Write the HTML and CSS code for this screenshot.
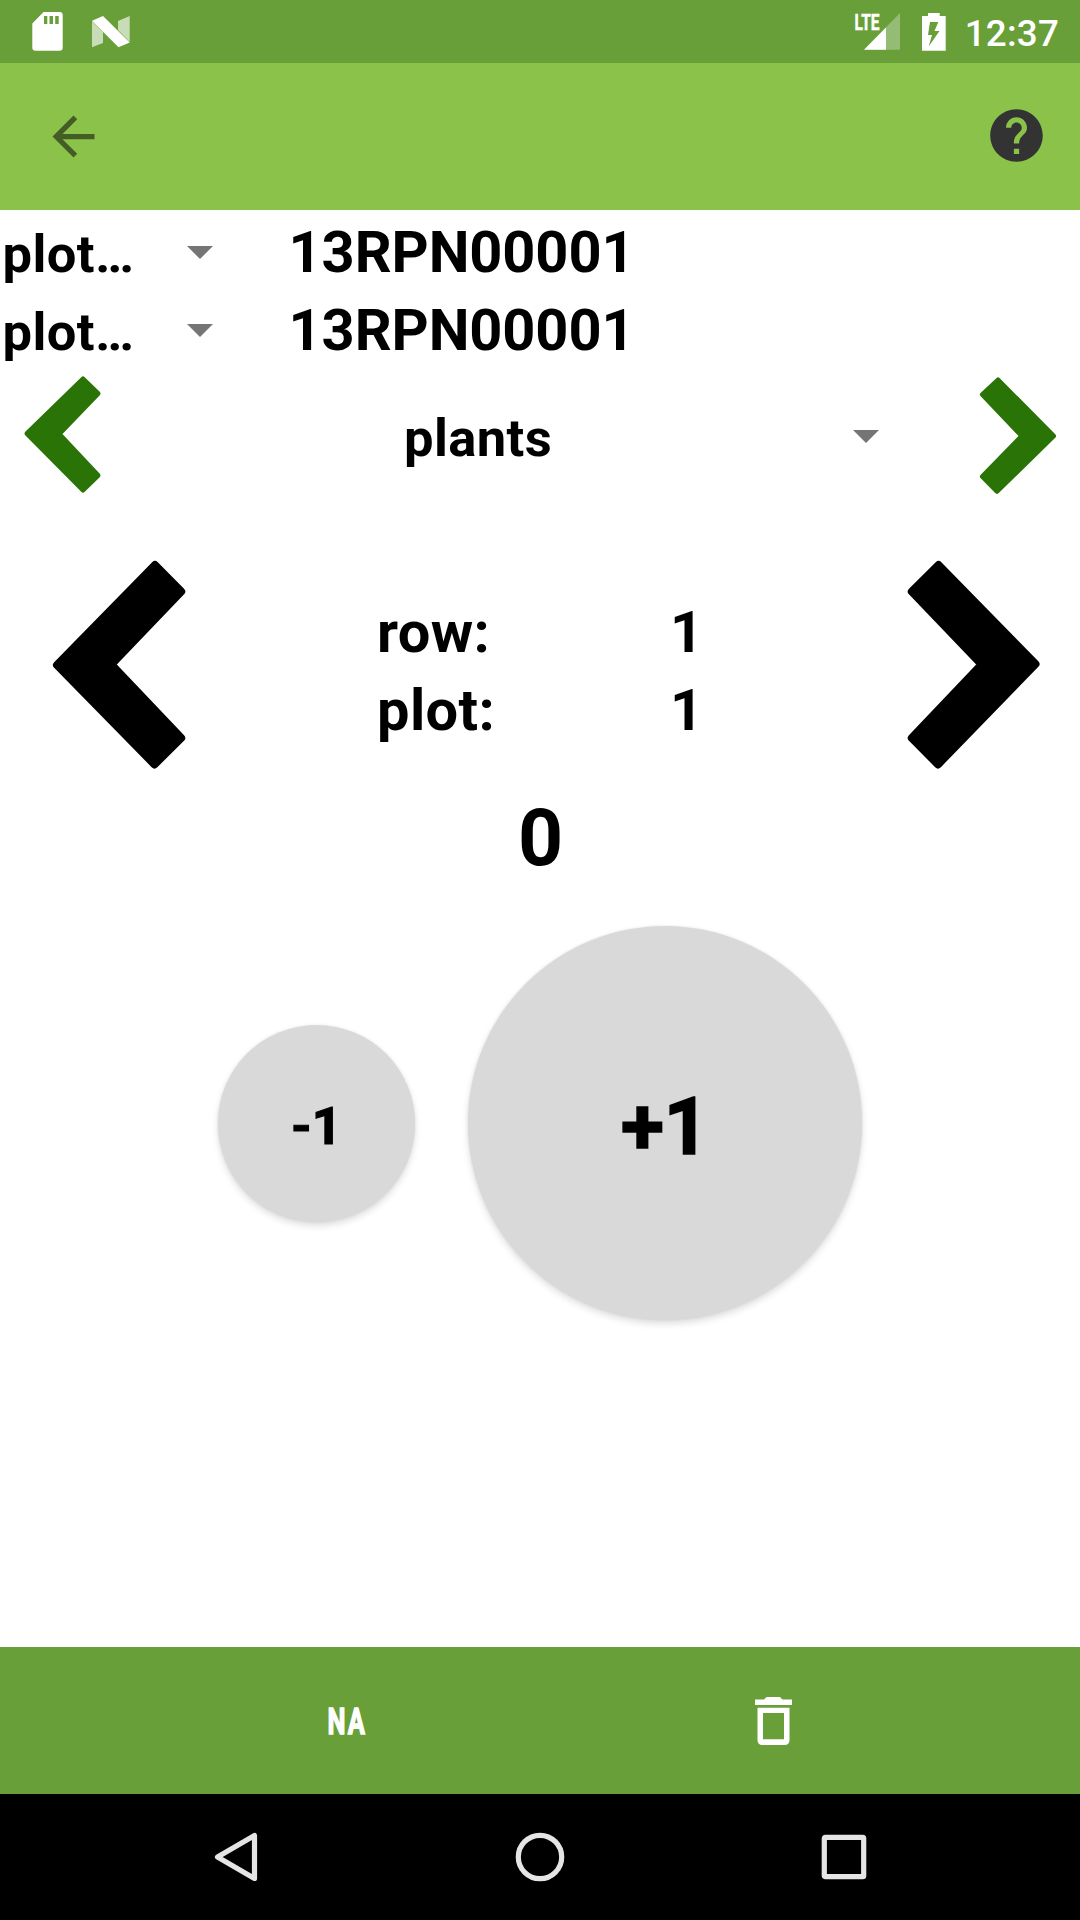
FILE: index.html
```html
<!DOCTYPE html>
<html lang="en">
<head>
<meta charset="utf-8">
<title>Collect</title>
<link rel="stylesheet" href="styles.css">
</head>
<body>
<div class="screen">
  <header class="status">
    <div class="status-left">
      <svg width="31" height="39" viewBox="0 0 31 39"><path fill="#fff" fill-rule="evenodd" d="M11.5 0H27.5Q30.700 0 30.700 3.200V35.500Q30.700 38.700 27.500 38.700H3.500Q.3 38.700.3 35.500V11.500ZM12 4V12H15.300V4ZM17.500 4V12H21V4ZM23.200 4V12H26.700V4Z"/></svg>
      <svg width="38" height="32" viewBox="0 0 38 32"><path fill="#fff" fill-opacity=".64" d="M0 5L11 16V27L0 31.300ZM26 5L37.700 0V26L26 14Z"/><path fill="#fff" d="M0 4.700L11 0L37.700 26.500L26.500 31.300Z"/></svg>
    </div>
    <div class="status-right">
      <svg class="signal" width="46" height="38" viewBox="0 0 46 38"><path fill="#fff" fill-opacity=".3" d="M45 0V36.700H9Z"/><path fill="#fff" d="M9 36.700L31 14.500V36.700Z"/><text class="lte" x="-.5" y="16.500" textLength="25" lengthAdjust="spacingAndGlyphs">LTE</text></svg>
      <svg class="battery" width="24" height="38" viewBox="0 0 24 38"><path fill="#fff" fill-rule="evenodd" d="M6 0H17.700V3H23.700V37.700H0V3H6ZM8 9L6 22H10L6.700 33.500L17.500 18H12.500L16.300 9Z"/></svg>
      <span class="clock">12:37</span>
    </div>
  </header>

  <nav class="appbar">
    <svg width="63" height="63" viewBox="0 0 24 24"><path fill="#445c26" d="M20 11H7.830l5.590-5.590L12 4l-8 8 8 8 1.410-1.410L7.830 13H20v-2z"/></svg>
    <svg class="help" width="63" height="63" viewBox="0 0 24 24"><path fill="#333" d="M12 2C6.480 2 2 6.480 2 12s4.480 10 10 10 10-4.480 10-10S17.520 2 12 2zm1 17h-2v-2h2v2zm2.070-7.750l-.9.920C13.450 12.900 13 13.500 13 15h-2v-.5c0-1.100.45-2.100 1.170-2.830l1.240-1.260c.37-.36.59-.86.59-1.410 0-1.100-.9-2-2-2s-2 .9-2 2H8c0-2.210 1.790-4 4-4s4 1.790 4 4c0 .88-.36 1.680-.93 2.250z"/></svg>
  </nav>

  <main class="content">
    <div class="id-row">
      <span class="spinner-text">plot…</span>
      <svg class="caret" width="26" height="13" viewBox="0 0 26 13"><path d="M0 0H26L13 13Z"/></svg>
      <span class="value">13RPN00001</span>
    </div>
    <div class="id-row">
      <span class="spinner-text">plot…</span>
      <svg class="caret" width="26" height="13" viewBox="0 0 26 13"><path d="M0 0H26L13 13Z"/></svg>
      <span class="value">13RPN00001</span>
    </div>

    <div class="trait-row">
      <svg class="chevron-green" width="78" height="118" viewBox="24 376 78 118"><path d="M27 433.500L83 379L98 393.500L59 434L98 475.500L83 490Z"/></svg>
      <div class="trait-spinner">
        <span class="spinner-text">plants</span>
        <svg class="caret" width="26" height="13" viewBox="0 0 26 13"><path d="M0 0H26L13 13Z"/></svg>
      </div>
      <svg class="chevron-green" width="78" height="118" viewBox="978.500 376 78 118"><path d="M1053 436L997.500 380L982 394.500L1021.500 436L982 476.500L996.500 491.200Z"/></svg>
    </div>

    <div class="plot-row">
      <svg class="chevron-black" width="134" height="210" viewBox="52 560 134 210"><path d="M57 665L155 565L181.200 591.500L111.300 664.500L181.200 738L154.500 764.400Z"/></svg>
      <div class="position">
        <span class="label">row:</span><span>1</span>
        <span class="label">plot:</span><span>1</span>
      </div>
      <svg class="chevron-black" width="134" height="210" viewBox="906.500 560 134 210"><path d="M1035 664L938 565L911.300 591.500L981.200 664.500L911.300 738L937.500 764.400Z"/></svg>
    </div>

    <div class="count">0</div>

    <div class="counter">
      <button class="round minus">-1</button>
      <button class="round plus">+1</button>
    </div>
  </main>

  <footer class="toolbar">
    <svg width="40" height="48" viewBox="0 0 40 48"><text class="na" x="0.500" y="36.500" textLength="39.500" lengthAdjust="spacingAndGlyphs">NA</text></svg>
    <svg width="37" height="48" viewBox="0 0 37 48"><path fill="#fff" fill-rule="evenodd" d="M0 2.500H9L11.500 0H25L27.500 2.500H37V8H0ZM2.500 10.700H34.500V43Q34.500 48 29.500 48H7.500Q2.500 48 2.500 43ZM8 16V42.300H29V16Z"/></svg>
  </footer>

  <div class="sysnav">
    <svg width="50" height="50" viewBox="0 0 50 50"><path d="M6.500 25L43.500 3.500V46.500Z"/></svg>
    <svg width="50" height="50" viewBox="0 0 50 50"><circle cx="25" cy="25" r="21.700"/></svg>
    <svg width="50" height="50" viewBox="0 0 50 50"><rect x="5.300" y="5.300" width="39.400" height="39.400" rx="1"/></svg>
  </div>
</div>
</body>
</html>
```
FILE: styles.css
```css
* { box-sizing: border-box; }
body { margin: 0; font-family: Roboto, sans-serif; color: #000; background: #fff; }
svg { display: block; flex: none; overflow: visible; }
.screen { width: 1080px; height: 1920px; display: flex; flex-direction: column; overflow: hidden; }

.status { height: 63px; background: #689f38; display: flex; justify-content: space-between; padding: 0 21px 0 32px; }
.status-left, .status-right { display: flex; align-items: center; }
.status-left { gap: 29px; }
.lte { font: 700 22.5px Roboto, sans-serif; fill: #fff; stroke: #fff; stroke-width: .5; }
.battery { margin-left: 21px; }
.clock { margin-left: 19px; padding-top: 3px; font-size: 36.75px; font-weight: 500; letter-spacing: .2px; color: #fff; }

.appbar { height: 147px; background: #8bc34a; display: flex; align-items: center; justify-content: space-between; padding: 0 32px 0 42px; }
.help { margin-top: -2px; }

.content { flex: 1; display: flex; flex-direction: column; padding-top: 3px; font-weight: 700; }
.id-row { height: 78px; display: grid; grid-template-columns: 184.400px 101.600px 1fr; align-items: baseline; padding-left: 2.600px; line-height: 78px; }
.spinner-text { font-size: 52.5px; letter-spacing: .4px; }
.caret { fill: #757575; }
.id-row .caret { align-self: start; margin-top: 33px; }
.value { font-size: 57.750px; letter-spacing: -.1px; }

.trait-row { height: 132px; display: flex; align-items: center; padding: 0 23.500px 0 24px; }
.trait-spinner { flex: 1; display: flex; align-items: center; justify-content: space-between; padding: 0 99.500px 0 302px; line-height: 62px; }
.trait-spinner .spinner-text { padding-top: 5px; }
.trait-spinner .caret { margin-top: 3px; }
.chevron-green path { fill: #2a7306; stroke: #2a7306; stroke-width: 5; stroke-linejoin: round; }

.plot-row { height: 224px; margin-top: 52px; display: flex; align-items: center; padding: 0 39.500px 0 52px; }
.position { flex: 1; display: grid; grid-template-columns: 293px auto; padding: 11px 0 0 191px; font-size: 57.750px; line-height: 78px; }
.label { letter-spacing: .4px; }
.chevron-black path { fill: #000; stroke: #000; stroke-width: 8; stroke-linejoin: round; }

.count { margin-top: 15px; padding-left: 1px; text-align: center; font-size: 78.750px; line-height: 92px; }

.counter { margin-top: 42px; display: flex; justify-content: center; align-items: center; gap: 53px; }
.round { border: 0; padding: 0; border-radius: 50%; background: #d9d9d9; color: #000; font-family: Roboto, sans-serif; font-weight: 700; box-shadow: 0 4px 7px rgba(0, 0, 0, .13), 0 0 3px rgba(0, 0, 0, .08); -webkit-text-stroke: 1.2px #000; }
.minus { width: 197px; height: 197px; font-size: 52.500px; padding-top: 5px; }
.plus { width: 394px; height: 394px; font-size: 78.750px; padding-top: 8px; -webkit-text-stroke-width: 1.6px; }

.toolbar { height: 147px; background: #689f38; display: flex; align-items: center; padding: 0 288px 0 327px; justify-content: space-between; }
.na { font: 700 37px Roboto, sans-serif; fill: #fff; stroke: #fff; stroke-width: 1.4; letter-spacing: 3px; }

.sysnav { height: 126px; background: #000; display: flex; align-items: center; justify-content: space-between; padding: 0 211px; }
.sysnav path, .sysnav circle, .sysnav rect { fill: none; stroke: #e5e5e5; stroke-width: 5.200; stroke-linejoin: round; }
```
